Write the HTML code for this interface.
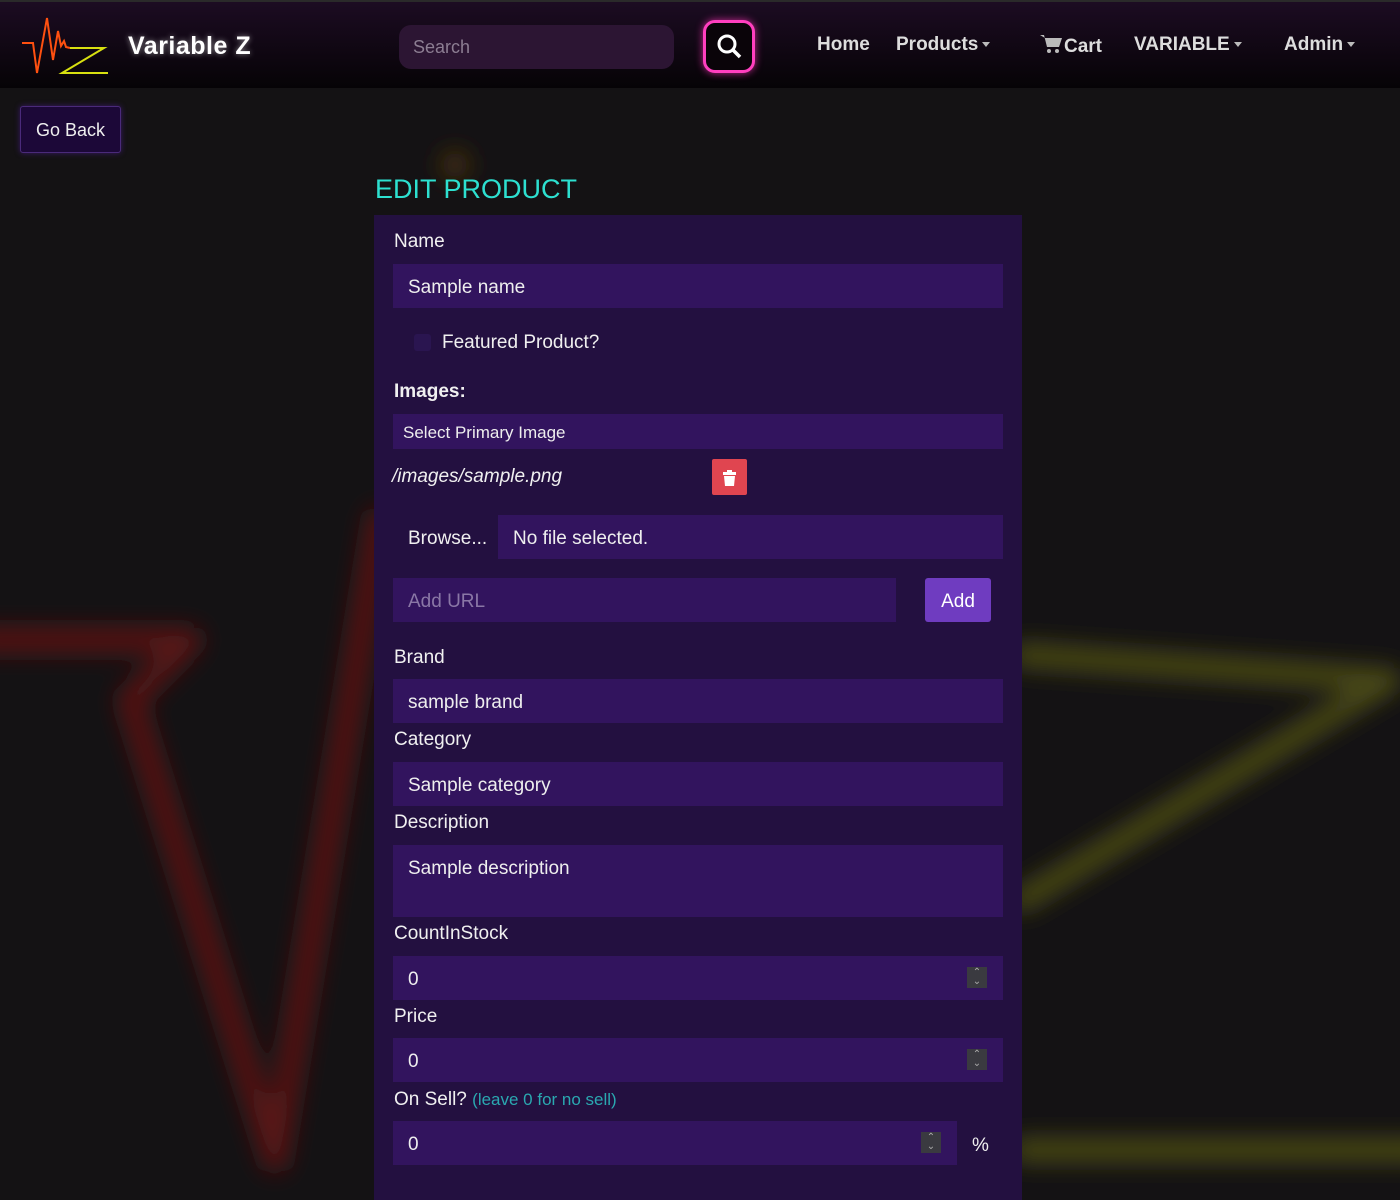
<!DOCTYPE html>
<html><head><style>
*{box-sizing:border-box;margin:0;padding:0}
body{width:1400px;height:1200px;overflow:hidden;background:#141214;font-family:"Liberation Sans",sans-serif;color:#fff;position:relative}
.bg{position:absolute;left:0;top:0}
nav{position:absolute;left:0;top:0;width:1400px;height:88px;background:linear-gradient(#1c0c22,#060306);border-top:2px solid #2a2a2a}
.brand{position:absolute;left:128px;top:30px;font-size:25px;font-weight:bold;letter-spacing:.5px;text-shadow:0 0 6px rgba(255,255,255,.5)}
.search{position:absolute;left:399px;top:23px;width:275px;height:44px;background:#2c1533;border-radius:12px;color:#8c7d92;font-size:18px;padding:12px 14px}
.sbtn{position:absolute;left:703px;top:18px;width:52px;height:53px;border:3px solid #ff3fbf;border-radius:12px;background:#0a0409;box-shadow:0 0 8px #c0288f}
.nl{position:absolute;top:32px;font-size:19px;font-weight:bold;color:#ddd;white-space:nowrap}
.car{display:inline-block;border-left:4px solid transparent;border-right:4px solid transparent;border-top:5px solid #bbb;vertical-align:middle;margin-left:4px}
.goback{position:absolute;left:20px;top:106px;width:101px;height:47px;background:#1c0838;border:1px solid #4a2a7a;border-radius:3px;box-shadow:0 0 6px #3a1a6a;font-size:18px;padding:13px 0;text-align:center;color:#eee;white-space:nowrap}
h1{position:absolute;left:375px;top:174px;font-size:27px;font-weight:normal;color:#2de0d0}
.panel{position:absolute;left:374px;top:215px;width:648px;height:985px;background:#231040}
.lbl{position:absolute;left:20px;font-size:19px;color:#f0f0f0;white-space:nowrap}
.in{position:absolute;left:19px;width:610px;height:44px;background:#32145e;font-size:19px;padding:13px 15px 0;color:#eee}
.spin{position:absolute;right:16px;top:11px;width:20px;height:21px;background:#3a3a40;color:#aaa;font-size:10px;line-height:9px;text-align:center;padding-top:1px}
</style></head><body>
<svg class="bg" width="1400" height="1200"><defs><filter id="b" x="-20%" y="-20%" width="140%" height="140%"><feGaussianBlur stdDeviation="12"/></filter></defs>
<g filter="url(#b)" fill="none" stroke-width="24" stroke-linejoin="round" stroke-linecap="round">
<polyline points="-20,640 190,640 130,700 275,1160 380,520" stroke="#5a1515"/>
<polyline points="1022,655 1390,680 1022,900" stroke="#4a4a12"/>
<line x1="1022" y1="1150" x2="1420" y2="1150" stroke="#4a4a12"/>
<circle cx="455" cy="165" r="14" fill="#4a3010" stroke="none"/>
</g></svg>
<nav>
<svg style="position:absolute;left:20px;top:14px" width="90" height="60" fill="none" stroke-width="2">
<polyline points="2,27 13,27 17,57 27,2 33,44 38,15 41,30 44,25 46,31 50,32" stroke="#ff5010"/>
<polyline points="50,32 84,32 42,57 88,57" stroke="#d8e010"/></svg>
<div class="brand">Variable Z</div>
<div class="search">Search</div>
<div class="sbtn"><svg width="46" height="47"><circle cx="21" cy="21" r="8" stroke="#fff" stroke-width="3" fill="none"/><line x1="27" y1="27" x2="34" y2="34" stroke="#fff" stroke-width="3.5"/></svg></div>
<div class="nl" style="left:817px">Home</div>
<div class="nl" style="left:896px">Products<span class="car"></span></div>
<div class="nl" style="left:1040px"><svg width="24" height="20" style="vertical-align:-2px"><path d="M0 1h4l3 12h12l3-9H5" fill="#bbb"/><circle cx="9" cy="17" r="2" fill="#bbb"/><circle cx="17" cy="17" r="2" fill="#bbb"/></svg>Cart</div>
<div class="nl" style="left:1134px">VARIABLE<span class="car"></span></div>
<div class="nl" style="left:1284px">Admin<span class="car"></span></div>
</nav>
<div class="goback">Go Back</div>
<h1>EDIT PRODUCT</h1>
<div class="panel">
<div class="lbl" style="top:16px">Name</div>
<div class="in" style="top:49px">Sample name</div>
<div style="position:absolute;left:40px;top:119px;width:17px;height:17px;background:#2a1550;border-radius:3px"></div>
<div class="lbl" style="top:117px;left:68px">Featured Product?</div>
<div class="lbl" style="top:166px;font-weight:bold">Images:</div>
<div class="in" style="top:199px;height:35px;padding:9px 10px 0;font-size:17px">Select Primary Image</div>
<div class="lbl" style="top:251px;left:18px;font-style:italic">/images/sample.png</div>
<div style="position:absolute;left:338px;top:244px;width:35px;height:36px;background:#e04550;border-radius:2px"><svg width="35" height="36"><rect x="11" y="13" width="13" height="3" fill="#fff"/><rect x="15" y="11" width="5" height="3" fill="#fff"/><path d="M12 17h11l-1 10h-9z" fill="#fff"/></svg></div>
<div class="lbl" style="top:313px;left:34px">Browse...</div>
<div class="in" style="top:300px;left:124px;width:505px">No file selected.</div>
<div class="in" style="top:363px;width:503px;color:#8a77a6">Add URL</div>
<div style="position:absolute;left:551px;top:363px;width:66px;height:44px;background:#6f3cc0;border-radius:3px;font-size:19px;padding:13px 0 0;text-align:center">Add</div>
<div class="lbl" style="top:432px">Brand</div>
<div class="in" style="top:464px">sample brand</div>
<div class="lbl" style="top:514px">Category</div>
<div class="in" style="top:547px">Sample category</div>
<div class="lbl" style="top:597px">Description</div>
<div class="in" style="top:630px;height:72px">Sample description</div>
<div class="lbl" style="top:708px">CountInStock</div>
<div class="in" style="top:741px">0<div class="spin">⌃<br>⌄</div></div>
<div class="lbl" style="top:791px">Price</div>
<div class="in" style="top:823px">0<div class="spin">⌃<br>⌄</div></div>
<div class="lbl" style="top:874px">On Sell? <span style="color:#2aa8b0;font-size:17px">(leave 0 for no sell)</span></div>
<div class="in" style="top:906px;width:564px">0<div class="spin">⌃<br>⌄</div></div>
<div class="lbl" style="top:920px;left:598px">%</div>
</div>
</body></html>
